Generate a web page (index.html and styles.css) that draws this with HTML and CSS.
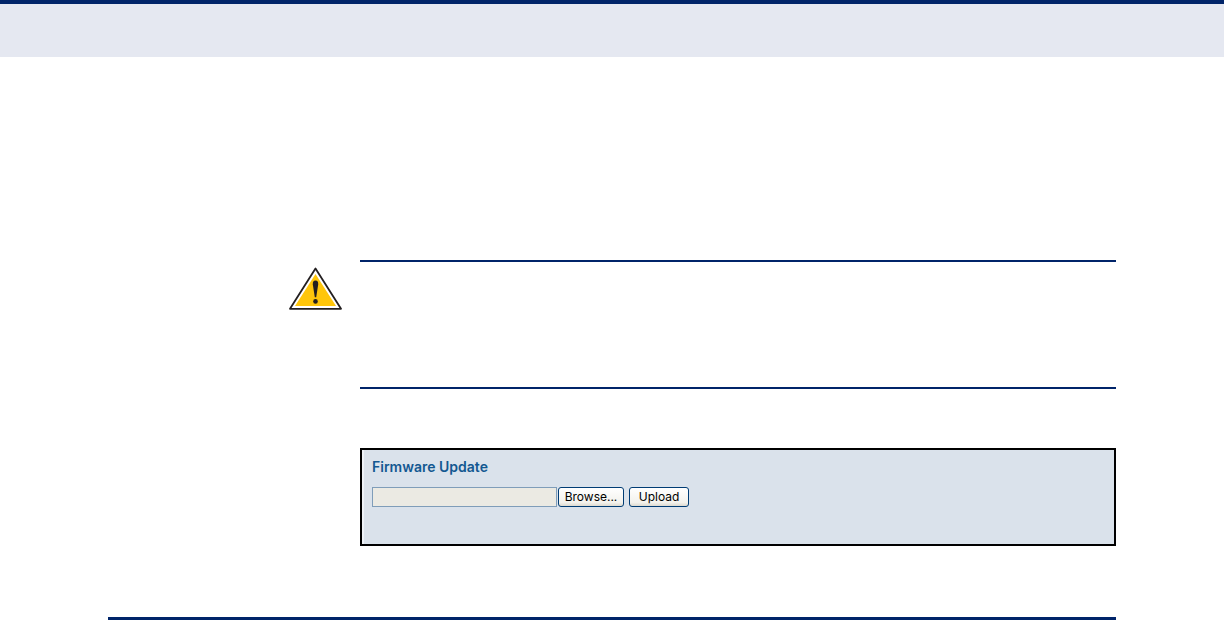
FILE: index.html
```html
<!DOCTYPE html>
<html lang="en">
<head>
<meta charset="utf-8">
<meta name="viewport" content="width=device-width, initial-scale=1">
<title>Firmware Update</title>
<link rel="stylesheet" href="styles.css">
</head>
<body>
<header class="page-header"></header>
<main class="content">
  <section class="caution">
    <svg class="caution-icon" viewBox="0 0 54 44" role="img" aria-label="Caution">
      <path d="M27.5 1.5 L53 41.8 H2 Z" fill="#fff" stroke="#231f20" stroke-width="1.8" stroke-linejoin="round"/>
      <path d="M27.5 7 L48 39 H7 Z" fill="#ffc60b"/>
      <path d="M27.5 13.6 C29.5 13.6 30.4 15.2 30.2 17.4 L28.2 30.3 H26.8 L24.8 17.4 C24.6 15.2 25.5 13.6 27.5 13.6 Z" fill="#231f20"/>
      <circle cx="27.5" cy="34.4" r="2.3" fill="#231f20"/>
    </svg>
    <div class="caution-body"></div>
  </section>
  <form class="panel">
    <h1 class="panel-title"><label for="firmware">Firmware Update</label></h1>
    <div class="controls">
      <input class="file-name" id="firmware" type="text">
      <button class="button browse" type="button">Browse...</button>
      <button class="button upload" type="button">Upload</button>
    </div>
  </form>
</main>
<footer class="page-footer"></footer>
</body>
</html>
```

FILE: styles.css
```css
* {
  box-sizing: border-box;
}

body {
  margin: 0;
  background: #fff;
  font-family: Inter, "Liberation Sans", Arial, sans-serif;
}

.page-header {
  height: 57px;
  border-top: 4px solid #002469;
  background: #e5e8f1;
}

.content {
  padding: 203px 108px 0 288px;
}

.caution {
  display: grid;
  grid-template-columns: 54px 1fr;
  column-gap: 18px;
}

.caution-icon {
  width: 54px;
  height: 44px;
  margin-top: 7px;
}

.caution-body {
  min-height: 129px;
  border-top: 2px solid #002469;
  border-bottom: 2px solid #002469;
}

.panel {
  min-height: 98px;
  margin: 59px 0 0 72px;
  padding: 8px 8px 8px 10px;
  border: 2px solid #000;
  background: #dae2eb;
  box-shadow: inset 2px 0 #eef2f7;
}

.panel-title {
  margin: 0;
  color: #135891;
  font-size: 14px;
  font-weight: 600;
  line-height: 18px;
}

.controls {
  display: flex;
  align-items: center;
  margin-top: 11px;
}

.file-name {
  width: 185px;
  height: 20px;
  border: 1px solid #7f9db9;
  background: #ebeae3;
  font: inherit;
  font-size: 12px;
}

.button {
  height: 20px;
  padding: 0;
  border: 1px solid #003c74;
  border-radius: 3px;
  background: linear-gradient(#fff, #f3f2ed 80%, #dddad0);
  color: #000;
  font-family: inherit;
  font-size: 12px;
  line-height: 16px;
}

.browse {
  width: 66px;
  margin-left: 1px;
}

.upload {
  width: 60px;
  margin-left: 5px;
}

.page-footer {
  height: 3px;
  margin: 71px 108px 0;
  background: #002469;
}
```
